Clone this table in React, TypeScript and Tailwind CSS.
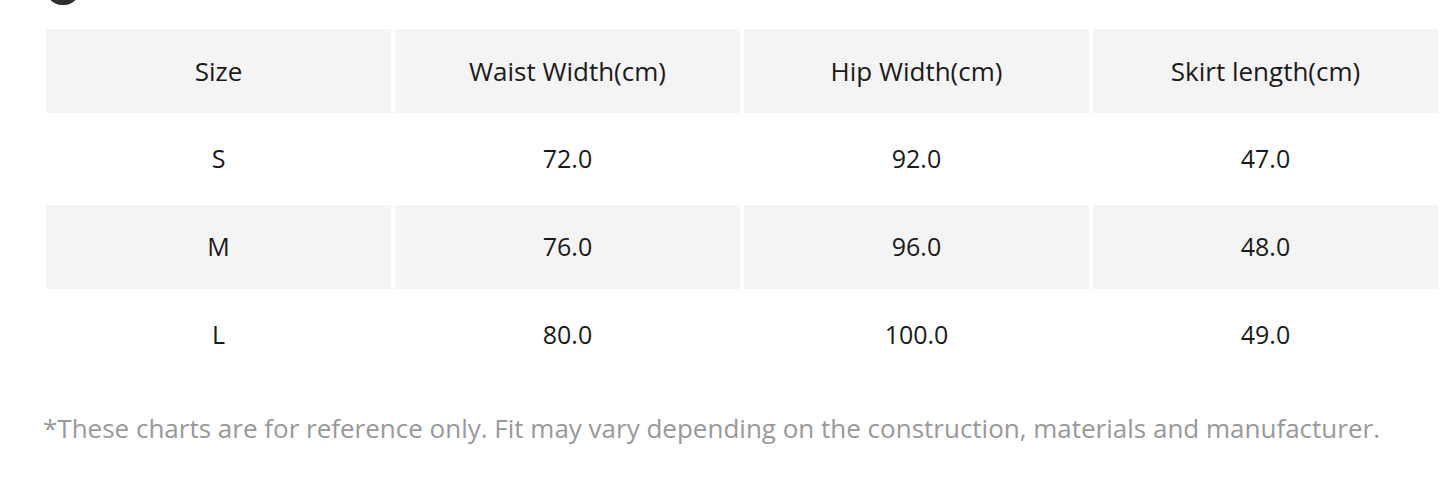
import React from "react";

const headers = ["Size", "Waist Width(cm)", "Hip Width(cm)", "Skirt length(cm)"];
const rows = [
  ["S", "72.0", "92.0", "47.0"],
  ["M", "76.0", "96.0", "48.0"],
  ["L", "80.0", "100.0", "49.0"],
];

export default function App() {
  return (
    <div
      className="w-[1442px] h-[484px] bg-white overflow-hidden pl-[42px]"
      style={{ fontFamily: '"Open Sans", "Liberation Sans", sans-serif' }}
    >
      <div className="ml-[4px] -mt-[27px] w-[34px] h-[32px] rounded-full bg-[#2e2e2e]" />
      <div className="mt-[20px] w-[1400px]">
        <div className="grid grid-cols-4 gap-[4px] p-[4px]">
          {headers.map((h) => (
            <div
              key={h}
              className="h-[84px] flex items-center justify-center bg-[#f4f4f4] text-[26px] text-[#1a1a1a]"
            >
              {h}
            </div>
          ))}
          {rows.map((r, i) =>
            r.map((c, j) => (
              <div
                key={i + "-" + j}
                className={
                  "h-[84px] flex items-center justify-center text-[25px] text-[#1a1a1a] " +
                  (i % 2 === 1 ? "bg-[#f4f4f4]" : "bg-white")
                }
              >
                {c}
              </div>
            ))
          )}
        </div>
      </div>
      <p className="mt-[29px] ml-[1px] text-[26px] leading-[36px] text-[#999999]">
        *These charts are for reference only. Fit may vary depending on the construction, materials and manufacturer.
      </p>
    </div>
  );
}
